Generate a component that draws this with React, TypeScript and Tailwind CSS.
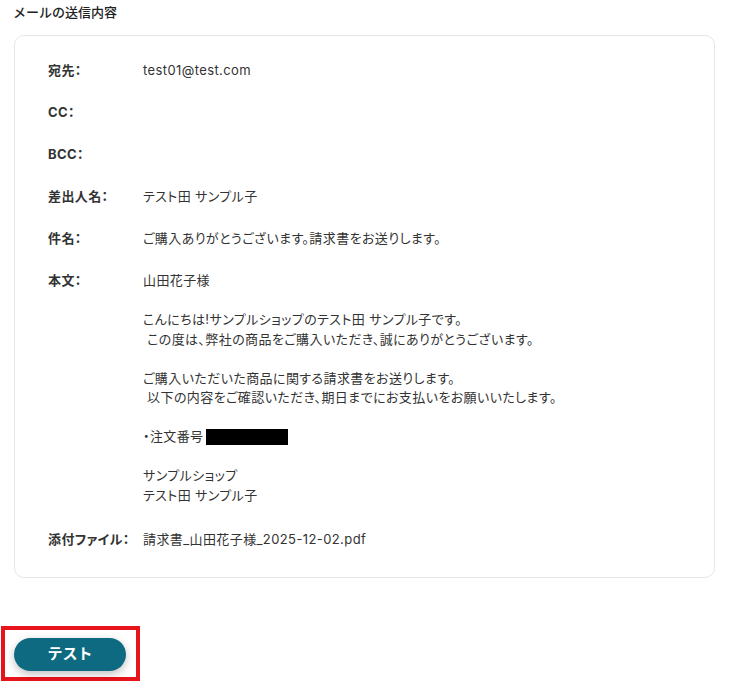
const rows: { label: string; value?: string[] }[] = [
  { label: "宛先：", value: ["test01@test.com"] },
  { label: "CC：" },
  { label: "BCC：" },
  { label: "差出人名：", value: ["テスト田 サンプル子"] },
  { label: "件名：", value: ["ご購入ありがとうございます。請求書をお送りします。"] },
];

export default function App() {
  return (
    <div
      className="w-[738px] h-[682px] overflow-hidden bg-white text-[13px] leading-[19.5px] text-[#333333]"
      style={{ fontFamily: 'Inter, "Noto Sans CJK JP", sans-serif' }}
    >
      <div className="px-[13px] pt-[3px]">
        <h2 className="text-[13px] font-medium text-[#222222]">メールの送信内容</h2>

        {/* Mail preview card */}
        <div className="mt-[12px] ml-[1px] w-[701px] rounded-[10px] border border-[#e6e6e6] pt-[25px] pb-[27px] pl-[33px] [font-feature-settings:'palt'] tracking-[0.4px] whitespace-pre">
          <div className="flex flex-col gap-[22.7px]">
            {rows.map((r) => (
              <div key={r.label} className="flex min-h-[19.5px]">
                <div className="w-[95px] shrink-0 font-bold">{r.label}</div>
                <div>{r.value?.map((v) => <div key={v}>{v}</div>)}</div>
              </div>
            ))}

            <div className="flex">
              <div className="w-[95px] shrink-0 font-bold">本文：</div>
              <div>
                <div>山田花子様</div>
                <div className="h-[19.5px]" />
                <div>こんにちは!サンプルショップのテスト田 サンプル子です。</div>
                <div>{" この度は、弊社の商品をご購入いただき、誠にありがとうございます。"}</div>
                <div className="h-[19.5px]" />
                <div>ご購入いただいた商品に関する請求書をお送りします。</div>
                <div>{" 以下の内容をご確認いただき、期日までにお支払いをお願いいたします。"}</div>
                <div className="h-[19.5px]" />
                <div className="flex items-center">
                  <span>・注文番号</span>
                  <span className="ml-[2px] inline-block h-[16px] w-[82px] bg-black" />
                </div>
                <div className="h-[19.5px]" />
                <div>サンプルショップ</div>
                <div>テスト田 サンプル子</div>
              </div>
            </div>

            <div className="mt-[2px] flex">
              <div className="w-[95px] shrink-0 font-bold">添付ファイル：</div>
              <div>請求書_山田花子様_2025-12-02.pdf</div>
            </div>
          </div>
        </div>
      </div>

      {/* Test button with highlight frame */}
      <div className="mt-[48px] ml-[1px] inline-block border-4 border-[#e8141c] pt-[8px] pb-[6px] pl-[9px] pr-[10px]">
        <button className="flex h-[33px] w-[112px] items-center justify-center rounded-full bg-[#0d6a80] text-[15px] font-bold text-white shadow-[0_3px_8px_rgba(0,0,0,0.25)]">
          テスト
        </button>
      </div>
    </div>
  );
}
